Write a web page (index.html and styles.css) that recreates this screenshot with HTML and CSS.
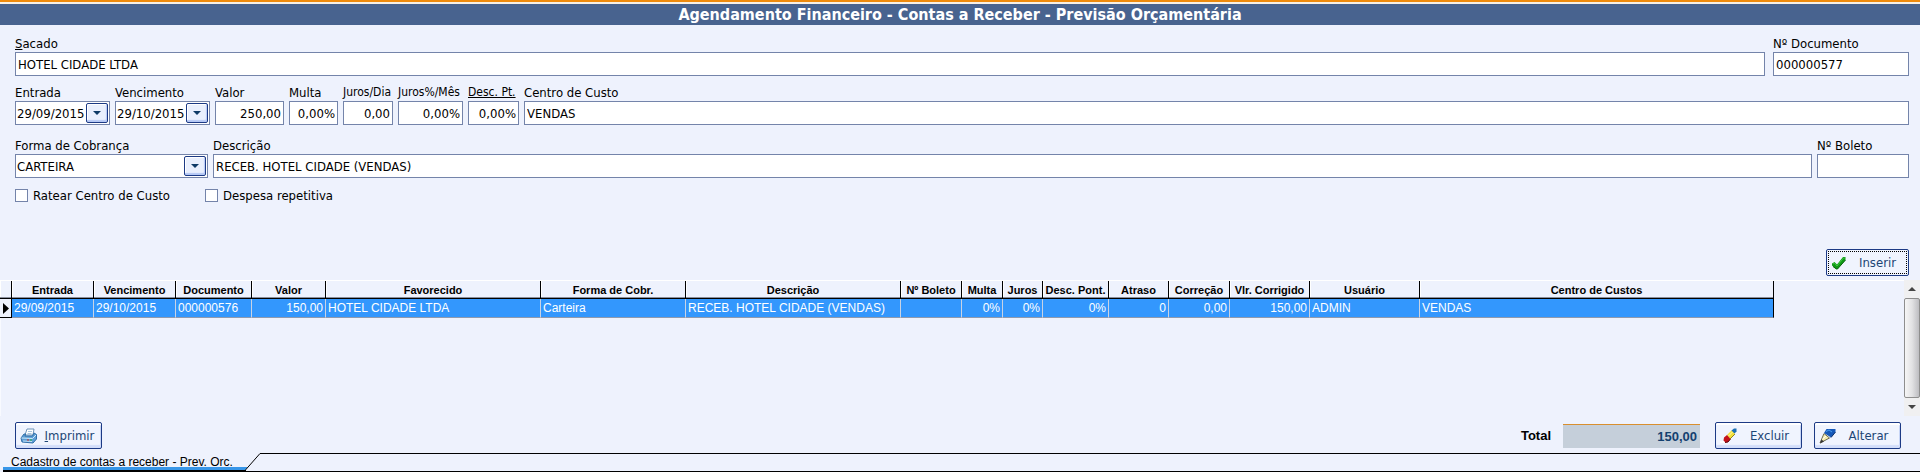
FILE: index.html
```html
<!DOCTYPE html>
<html lang="pt-BR">

<head>
    <meta charset="UTF-8">
    <meta name="viewport" content="width=device-width, initial-scale=1.0">
    <title>Agendamento Financeiro</title>
    <link rel="stylesheet" href="styles.css">
</head>

<body>

    <header class="header">
        <h1>Agendamento Financeiro - Contas a Receber - Previsão Orçamentária</h1>
    </header>

    <form class="form">
        <div class="row row-sacado">
            <div class="field grow">
                <label for="sacado"><u>S</u>acado</label>
                <input type="text" id="sacado" value="HOTEL CIDADE LTDA">
            </div>
            <div class="field documento">
                <label for="documento">Nº Documento</label>
                <input type="text" id="documento" value="000000577">
            </div>
        </div>

        <div class="row row-valores">
            <div class="field data">
                <label for="entrada">Entrada</label>
                <div class="combo">
                    <input type="text" id="entrada" value="29/09/2015">
                    <button type="button" class="drop" aria-label="Entrada"></button>
                </div>
            </div>
            <div class="field data">
                <label for="vencimento">Vencimento</label>
                <div class="combo">
                    <input type="text" id="vencimento" value="29/10/2015">
                    <button type="button" class="drop" aria-label="Vencimento"></button>
                </div>
            </div>
            <div class="field valor">
                <label for="valor">Valor</label>
                <input type="text" id="valor" class="num" value="250,00">
            </div>
            <div class="field multa">
                <label for="multa">Multa</label>
                <input type="text" id="multa" class="num" value="0,00%">
            </div>
            <div class="field juros-dia">
                <label for="jurosDia">Juros/Dia</label>
                <input type="text" id="jurosDia" class="num" value="0,00">
            </div>
            <div class="field juros-mes">
                <label for="jurosMes">Juros%/Mês</label>
                <input type="text" id="jurosMes" class="num" value="0,00%">
            </div>
            <div class="field desc-pt">
                <label for="descPt"><u>Desc. Pt.</u></label>
                <input type="text" id="descPt" class="num" value="0,00%">
            </div>
            <div class="field grow">
                <label for="centro">Centro de Custo</label>
                <input type="text" id="centro" value="VENDAS">
            </div>
        </div>

        <div class="row row-cobranca">
            <div class="field forma">
                <label for="forma">Forma de Cobrança</label>
                <div class="combo">
                    <select id="forma">
                        <option>CARTEIRA</option>
                    </select>
                    <span class="drop"></span>
                </div>
            </div>
            <div class="field grow">
                <label for="descricao">Descrição</label>
                <input type="text" id="descricao" value="RECEB. HOTEL CIDADE (VENDAS)">
            </div>
            <div class="field boleto">
                <label for="boleto">Nº Boleto</label>
                <input type="text" id="boleto">
            </div>
        </div>

        <div class="checks">
            <label><input type="checkbox"> Ratear Centro de Custo</label>
            <label><input type="checkbox"> Despesa repetitiva</label>
        </div>

        <div class="insert">
            <button type="button" class="btn focused">
                <svg width="16" height="16" viewBox="0 0 16 16">
                    <path d="M1 8.5 L3.5 7 L6 9.5 L12 2 L14.5 2 L14.5 5 L6.5 14 L5 14 L1 10.5 Z" fill="#0f9a16" />
                    <path d="M2 9 L3.5 8.2 L6 11 L12.5 3 L13.8 3" fill="none" stroke="#3fc540" />
                    <path d="M2 11.5 L5.5 14 L6.5 14 L14.5 5" fill="none" stroke="#07610c" />
                </svg>
                <span>Inserir</span>
            </button>
        </div>
    </form>

    <section class="grid">
        <div class="grid-body">
            <table>
                <colgroup>
                    <col class="w12">
                    <col class="w82">
                    <col class="w82">
                    <col class="w76">
                    <col class="w74">
                    <col class="w215">
                    <col class="w145">
                    <col class="w215">
                    <col class="w61">
                    <col class="w41">
                    <col class="w40">
                    <col class="w66">
                    <col class="w60">
                    <col class="w61">
                    <col class="w80">
                    <col class="w110">
                    <col class="w354">
                </colgroup>
                <thead>
                    <tr>
                        <th></th>
                        <th>Entrada</th>
                        <th>Vencimento</th>
                        <th>Documento</th>
                        <th>Valor</th>
                        <th>Favorecido</th>
                        <th>Forma de Cobr.</th>
                        <th>Descrição</th>
                        <th>Nº Boleto</th>
                        <th>Multa</th>
                        <th>Juros</th>
                        <th>Desc. Pont.</th>
                        <th>Atraso</th>
                        <th>Correção</th>
                        <th>Vlr. Corrigido</th>
                        <th>Usuário</th>
                        <th>Centro de Custos</th>
                    </tr>
                </thead>
                <tbody>
                    <tr>
                        <td class="marker"><svg width="6" height="11" viewBox="0 0 6 11"><path d="M0 0 L6 5.5 L0 11 Z" /></svg></td>
                        <td>29/09/2015</td>
                        <td>29/10/2015</td>
                        <td>000000576</td>
                        <td class="num">150,00</td>
                        <td>HOTEL CIDADE LTDA</td>
                        <td>Carteira</td>
                        <td>RECEB. HOTEL CIDADE (VENDAS)</td>
                        <td></td>
                        <td class="num">0%</td>
                        <td class="num">0%</td>
                        <td class="num">0%</td>
                        <td class="num">0</td>
                        <td class="num">0,00</td>
                        <td class="num">150,00</td>
                        <td>ADMIN</td>
                        <td>VENDAS</td>
                    </tr>
                </tbody>
            </table>
        </div>
        <div class="scrollbar">
            <button type="button" class="arrow up" aria-label="Subir"></button>
            <div class="thumb"></div>
            <button type="button" class="arrow down" aria-label="Descer"></button>
        </div>
    </section>

    <div class="actions">
        <button type="button" class="btn">
            <svg width="18" height="16" viewBox="0 0 18 16">
                <path d="M5 7 L7 1 L14 1 L13 7 Z" fill="#fff" stroke="#6d93b8" />
                <path d="M8 3.5 H12 M7.5 5.5 H11.5" stroke="#a8c4dc" />
                <path d="M1 10 L4 6 L5.5 6 L5 8 L12.5 8 L14 5 L16.5 6.5 L16.5 11 L13 15 L2 14 Z" fill="#5d9fd6" stroke="#2f6ea8" />
                <path d="M1.5 10 L12.5 10.5 L16 7" fill="none" stroke="#d4eafa" />
                <path d="M3 13 L12 13.5" stroke="#c5e2f7" />
                <path d="M7 12 h2" stroke="#c32" />
                <path d="M10 12 h2" stroke="#2a4" />
            </svg>
            <span><u>I</u>mprimir</span>
        </button>
        <label class="total-label" for="total">Total</label>
        <input type="text" id="total" class="total" value="150,00" readonly>
        <button type="button" class="btn">
            <svg width="18" height="16" viewBox="0 0 18 16">
                <path d="M0 13 H5 L7 15 H0 Z" fill="#fff" />
                <path d="M7 7 L12 2 L15 6 L10 11 Z" fill="#f3e13a" />
                <path d="M10 11 L15 6" stroke="#8f8420" />
                <path d="M8.5 8 L13 3.5" stroke="#fffbb0" />
                <path d="M11.5 2.5 L14 0.5 L16.5 0.5 L16.5 3.5 L14.5 5.5 Z" fill="#1a6fb4" />
                <path d="M4 9.5 L7 7 L10.5 11 L8 14 L5.5 14.5 L3.5 12.5 Z" fill="#c3121a" />
                <path d="M5 14.5 L8 14 L10.5 11" fill="none" stroke="#5e070b" />
            </svg>
            <span>Excluir</span>
        </button>
        <button type="button" class="btn">
            <svg width="18" height="16" viewBox="0 0 18 16">
                <path d="M1 15 L5 5.5 L10.5 10 Z" fill="#f6ecaa" stroke="#6b6a52" />
                <path d="M1 15.5 L2.5 11.5 L5 13.5 Z" fill="#333" />
                <path d="M3.5 11 L7 8" stroke="#fff" />
                <path d="M5 5 L7.5 1 L16.5 1 L16.5 4 L12 9.5 Z" fill="#1558b8" />
                <path d="M7 3.5 L10 2 L13 4" fill="none" stroke="#4aa0ee" />
                <path d="M12 9.5 L16.5 4" stroke="#0a2c66" />
            </svg>
            <span>Alterar</span>
        </button>
    </div>

    <nav class="tabs">
        <button type="button" class="tab">Cadastro de contas a receber - Prev. Orc.</button>
        <svg class="slope" width="16" height="19" viewBox="0 0 16 19">
            <path d="M0 17 V14 H3 L0 17 Z" fill="#3796e8" />
            <path d="M0 17 H1 L1 19 H0 Z" />
            <path d="M0 17.5 L15 0.5 H16" fill="none" stroke="#000" />
            <path d="M0 18.5 H16" stroke="#000" />
        </svg>
        <div class="rest"></div>
    </nav>

</body>

</html>
```
FILE: styles.css
```css
* {
    box-sizing: border-box;
}

body {
    margin: 0;
    background: #eef2fd;
    color: #000;
    font-family: "DejaVu Sans Condensed", "DejaVu Sans", sans-serif;
    font-size: 13px;
}

input,
select,
button {
    font: inherit;
    color: inherit;
    margin: 0;
    border-radius: 0;
}

/* title bar */
.header {
    border-top: 2px solid #ee8a0c;
}

.header h1 {
    height: 23px;
    margin: 0;
    border-top: 2px solid #f8f0e4;
    background: #48638f;
    color: #fff;
    font-size: 16px;
    line-height: 22px;
    text-align: center;
}

/* form */
.form {
    padding: 10px 11px 4px 15px;
}

.row {
    display: flex;
    gap: 5px;
}

.row-sacado {
    gap: 8px;
}

.row-valores {
    margin-top: 8px;
}

.row-cobranca {
    margin-top: 12px;
}

.field label {
    display: block;
    height: 17px;
    line-height: 17px;
    white-space: nowrap;
}

.field input,
.combo {
    display: block;
    width: 100%;
    height: 24px;
    padding: 0 2px;
    border: 1px solid #7484aa;
    background: #fff;
}

.grow {
    flex: 1;
}

.documento {
    width: 136px;
}

.data {
    width: 95px;
}

.valor {
    width: 69px;
}

.multa {
    width: 49px;
}

.juros-dia {
    width: 50px;
}

.juros-mes {
    width: 65px;
}

.desc-pt {
    width: 51px;
}

.juros-dia label,
.juros-mes label,
.desc-pt label {
    font-size: 12px;
}

.forma {
    width: 193px;
}

.boleto {
    width: 92px;
}

.num {
    text-align: right;
}

.combo {
    display: flex;
    align-items: center;
    padding: 0 1px;
}

.combo input,
.combo select {
    flex: 1;
    width: 0;
    height: 22px;
    padding: 0;
    border: none;
    background: none;
    appearance: none;
}

.drop {
    display: flex;
    flex: none;
    align-items: center;
    justify-content: center;
    width: 22px;
    height: 20px;
    padding: 0;
    border: 1px solid #1c3a85;
    border-radius: 2px;
    background: #e9effd;
    box-shadow: inset -1px -2px 1px #b5c8f5, inset 1px 1px 0 #fff;
    pointer-events: none;
}

.drop::after {
    content: "";
    border: 4px solid transparent;
    border-top-color: #0e3a66;
    border-bottom: none;
}

.checks {
    display: flex;
    gap: 35px;
    margin-top: 9px;
}

.checks label {
    display: flex;
    align-items: center;
    gap: 5px;
    height: 16px;
}

.checks input {
    appearance: none;
    width: 13px;
    height: 13px;
    border: 1px solid #7484aa;
    background: #fff;
}

.insert {
    display: flex;
    justify-content: flex-end;
    margin-top: 46px;
}

.btn {
    display: flex;
    align-items: center;
    gap: 4px;
    width: 87px;
    height: 27px;
    padding: 0 4px;
    border: 1px solid #1c3a85;
    border-radius: 2px;
    background: #f0f4fe;
    box-shadow: inset 0 2px 0 #fff, inset 0 -3px 1px #d3defa, inset -1px 0 0 #c6d4f6;
    color: #1d4676;
}

.btn svg {
    flex: none;
}

.btn span {
    flex: 1;
    text-align: center;
}

.focused {
    width: 83px;
    box-shadow: none;
    outline: 1px dotted #000;
    outline-offset: -3px;
}

/* grid */
.grid {
    display: flex;
    height: 136px;
    border-left: 1px solid #f8faff;
}

.grid-body {
    flex: 1;
    overflow: hidden;
    border-top: 1px solid #fff;
    margin-left: -1px;
}

.grid table {
    width: 0;
    table-layout: fixed;
    border-collapse: separate;
    border-spacing: 0;
    font-family: "Liberation Sans", Arial, sans-serif;
    font-size: 12px;
    white-space: nowrap;
}

.grid th {
    height: 18px;
    padding: 0;
    border-right: 1px solid #000;
    border-bottom: 1px solid #000;
    box-shadow: inset 0 -1px 0 #8a8f9c, inset 1px 0 0 #fff;
    font-size: 11px;
}

.grid td {
    height: 19px;
    padding: 0 2px;
    border-right: 1px solid #c9d3e4;
    border-bottom: 1px solid #8f9aae;
    background: #3397fd;
    color: #fff;
    line-height: 17px;
}

.grid td:last-child {
    border-right-color: #000;
}

.grid .marker {
    padding: 0 0 0 3px;
    border-color: #000;
    background: #eef2fd;
}

.marker svg {
    display: block;
}

.w12 { width: 12px; }
.w82 { width: 82px; }
.w76 { width: 76px; }
.w74 { width: 74px; }
.w215 { width: 215px; }
.w145 { width: 145px; }
.w61 { width: 61px; }
.w41 { width: 41px; }
.w40 { width: 40px; }
.w66 { width: 66px; }
.w60 { width: 60px; }
.w80 { width: 80px; }
.w110 { width: 110px; }
.w354 { width: 354px; }

.scrollbar {
    display: flex;
    flex-direction: column;
    width: 16px;
    background: #f0f0f1;
}

.arrow {
    display: flex;
    align-items: center;
    justify-content: center;
    height: 18px;
    padding: 0;
    border: none;
    background: none;
}

.arrow::after {
    content: "";
    border: 4px solid transparent;
}

.up::after {
    border-top: none;
    border-bottom-color: #444;
}

.down::after {
    border-bottom: none;
    border-top-color: #444;
}

.thumb {
    flex: 1;
    border: 1px solid #8e8e8e;
    border-radius: 2px;
    background: linear-gradient(to right, #f6f6f6, #e2e2e4 50%, #bdbdc1);
}

/* footer buttons */
.actions {
    display: flex;
    align-items: center;
    gap: 12px;
    padding: 6px 19px 4px 15px;
}

.total-label {
    margin-left: auto;
    font-family: "Liberation Sans", Arial, sans-serif;
    font-weight: bold;
}

.total {
    width: 137px;
    height: 24px;
    margin-right: 3px;
    padding: 0 3px;
    border: none;
    border-top: 1px solid #d98f2e;
    background: #c5cfda;
    color: #14406f;
    font-family: "Liberation Sans", Arial, sans-serif;
    font-weight: bold;
    text-align: right;
}

.tabs {
    display: flex;
    padding-left: 3px;
}

.tab {
    height: 19px;
    padding: 0 12px 0 8px;
    border: none;
    border-bottom: 2px solid #000;
    background: linear-gradient(to top, #3796e8 3px, transparent 3px);
    font-family: "Liberation Sans", Arial, sans-serif;
    font-size: 12px;
    line-height: 16px;
}

.slope {
    flex: none;
}

.rest {
    flex: 1;
    border-top: 1px solid #000;
    border-bottom: 1px solid #000;
}
```
